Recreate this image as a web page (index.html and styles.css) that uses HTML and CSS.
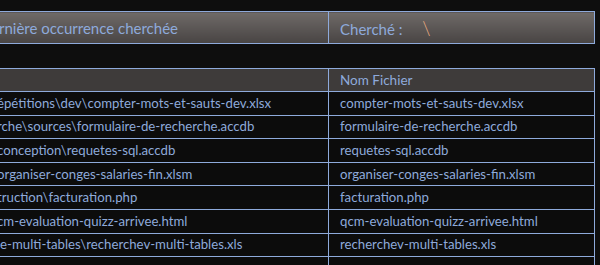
FILE: index.html
```html
<!DOCTYPE html>
<html lang="fr">
<head>
    <meta charset="UTF-8">
    <meta name="viewport" content="width=device-width, initial-scale=1.0">
    <title>Recherche de fichiers</title>
    <link rel="stylesheet" href="styles.css">
</head>
<body>
    <div class="sheet">
        <table class="search-band">
            <colgroup>
                <col class="col-path">
                <col class="col-name">
            </colgroup>
            <tr>
                <td class="cut">rnière occurrence cherchée</td>
                <td>Cherché : <span class="needle">\</span></td>
            </tr>
        </table>

        <table class="results">
            <colgroup>
                <col class="col-path">
                <col class="col-name">
            </colgroup>
            <thead>
                <tr>
                    <th></th>
                    <th>Nom Fichier</th>
                </tr>
            </thead>
            <tbody>
                <tr>
                    <td class="cut">épétitions\dev\compter-mots-et-sauts-dev.xlsx</td>
                    <td>compter-mots-et-sauts-dev.xlsx</td>
                </tr>
                <tr>
                    <td class="cut">rche\sources\formulaire-de-recherche.accdb</td>
                    <td>formulaire-de-recherche.accdb</td>
                </tr>
                <tr>
                    <td class="cut">conception\requetes-sql.accdb</td>
                    <td>requetes-sql.accdb</td>
                </tr>
                <tr>
                    <td class="cut">organiser-conges-salaries-fin.xlsm</td>
                    <td>organiser-conges-salaries-fin.xlsm</td>
                </tr>
                <tr>
                    <td class="cut">truction\facturation.php</td>
                    <td>facturation.php</td>
                </tr>
                <tr>
                    <td class="cut">cm-evaluation-quizz-arrivee.html</td>
                    <td>qcm-evaluation-quizz-arrivee.html</td>
                </tr>
                <tr>
                    <td class="cut">le-multi-tables\recherchev-multi-tables.xls</td>
                    <td>recherchev-multi-tables.xls</td>
                </tr>
                <tr>
                    <td class="cut"></td>
                    <td></td>
                </tr>
            </tbody>
        </table>
    </div>
</body>
</html>
```

FILE: styles.css
```css
* {
    box-sizing: border-box;
    margin: 0;
    padding: 0;
}

body {
    background-color: #0e0e0e;
    font-family: Lato, 'Open Sans', sans-serif;
    color: #8eaadb;
    overflow: hidden;
}

.sheet {
    padding-top: 11px;
    margin-left: -5px;
}

table {
    border-collapse: collapse;
    table-layout: fixed;
    width: 599px;
}

.col-path {
    width: 333px;
}

.col-name {
    width: 266px;
}

td,
th {
    border: 1px solid #8eaadb;
    white-space: nowrap;
    overflow: hidden;
    text-align: left;
    font-weight: normal;
    padding: 0 11px;
}

/* la colonne du chemin complet déborde à gauche de l'écran */
td.cut {
    padding-left: 0;
    text-indent: 1px;
}

/* bandeau de recherche */
.search-band td {
    height: 32px;
    font-size: 15px;
    background: linear-gradient(#6f6a68, #484443);
}

.search-band td.cut {
    text-indent: 3px;
}

.needle {
    color: #f4b183;
    margin-left: 16px;
    font-size: 19px;
    font-weight: 300;
}

.results {
    margin-top: 24px;
}

.results th {
    height: 23px;
    font-size: 13.5px;
    background-color: #3e3b3a;
}

.results td {
    height: 23.6px;
    font-size: 13.2px;
    padding-bottom: 1px;
    background-color: #0c0c0c;
}
```
